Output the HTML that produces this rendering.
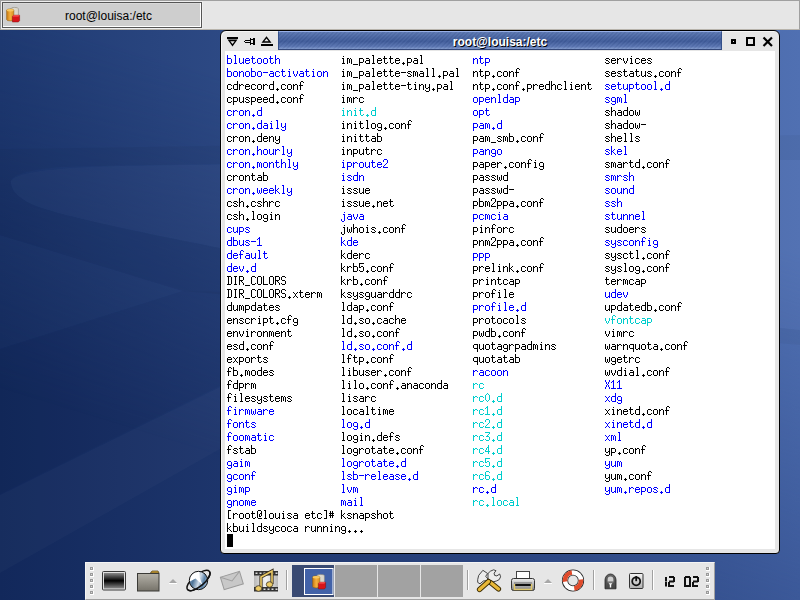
<!DOCTYPE html>
<html><head><meta charset="utf-8">
<style>
*{margin:0;padding:0;box-sizing:border-box}
html,body{width:800px;height:600px;overflow:hidden}
body{position:relative;font-family:"Liberation Sans",sans-serif;background:#1c3570}
.abs{position:absolute}
#bg{left:0;top:0;width:800px;height:600px;
 background:linear-gradient(to right,#12285b,#3a5797)}
#bg2{left:0;top:0;width:800px;height:600px;
 background:linear-gradient(to right,#1f3a72,#5070b2);
 -webkit-mask-image:linear-gradient(197deg,#000 30%,transparent 75%);mask-image:linear-gradient(197deg,#000 30%,transparent 75%)}
/* top taskbar */
#topbar{left:0;top:0;width:800px;height:30px;background:#e6e6e6;border-top:1px solid #a0a0a0;border-left:1px solid #a0a0a0;border-right:1px solid #a0a0a0;border-bottom:1px solid #b8b4ac}
#tbtn{left:1px;top:1px;width:200px;height:26px;border:1px solid #555;background:#cecece;
 box-shadow:inset -1px -1px 0 #fff, inset 1px 1px 0 #d8d8d8, 0 0 0 1px #eeeeee}
#tbtn span{position:absolute;left:62px;top:6px;font-size:12px;color:#000}
/* terminal window */
#win{left:220px;top:30px;width:560px;height:524px;background:#e6e6e6;border:1px solid #000;border-radius:6px 6px 4px 4px;box-shadow:inset 1px 1px 0 #f6f6f6}
#title{left:57px;top:0px;width:444px;height:19px;
 background:repeating-linear-gradient(135deg,rgba(255,255,255,0.03) 0px,rgba(255,255,255,0.03) 1.5px,rgba(0,0,0,0.03) 1.5px,rgba(0,0,0,0.03) 3px),linear-gradient(#5b77b1 0%,#4a66a3 30%,#3f5b9a 55%,#5a75b2 85%,#7f98cc 100%);
 border-top:1px solid #98b0e8;border-bottom:1px solid #34487a;border-left:1px solid #34508a;border-right:1px solid #34508a}
#title span{position:absolute;left:-1px;width:444px;text-align:center;top:3px;font-weight:bold;font-size:12px;color:#fff;text-shadow:1px 1px 0 #000}
#term{left:4px;top:20px;width:550px;height:498px;background:#fff}
.cur{position:absolute;left:2px;top:483px;width:6px;height:13px;background:#000}
/* bottom panel */
#panel{left:85px;top:562px;width:630px;height:38px;background:#e6e6e6;border-top:1px solid #f4f4f4;border-left:1px solid #f4f4f4;border-bottom:1px solid #a0a0a0;border-right:1px solid #a0a0a0}
</style></head>
<body>
<div id="bg" class="abs"></div><div id="bg2" class="abs"></div>
<svg class="abs" style="left:0;top:0" width="800" height="600">
 <path d="M0 149 C 80 148, 160 147, 800 135 L 800 160 C 400 162, 160 164, 60 167 C 25 170, 8 176, 11 184 L 0 186 Z" fill="#000" opacity="0.035"/>
 <path d="M11 184 C 8 176, 30 168, 120 166 C 220 164, 400 162, 800 160 L 800 330 C 500 300, 300 265, 220 248 C 120 228, 40 212, 24 200 C 16 195, 12 190, 11 184 Z" fill="#fff" opacity="0.02"/>
 <path d="M0 186 L 11 184 C 12 190, 16 195, 24 200 C 40 212, 120 228, 220 248 C 300 265, 500 300, 800 330 L 800 345 L 183 291 L 0 235 Z" fill="#000" opacity="0.035"/>
 <path d="M0 235 L 183 291 L 0 349 Z" fill="#fff" opacity="0.01"/>
 <path d="M0 349 L 183 291 L 240 292 L 240 376 L 0 494 Z" fill="#000" opacity="0.025"/>
 <path d="M0 495 L 220 387 L 300 350 L 300 410 L 220 449 L 0 573 Z" fill="#fff" opacity="0.025"/>
</svg>
<div id="topbar" class="abs">
 <div id="tbtn" class="abs"><span>root@louisa:/etc</span></div>
</div>
<div id="win" class="abs">
 <div id="title" class="abs"><span>root@louisa:/etc</span></div>
 <div id="term" class="abs"><svg class="abs" style="left:0;top:0" width="550" height="498" shape-rendering="crispEdges"><defs><path id="g0" d="M1 3h1v1h-1zM3 3h1v1h-1zM1 4h1v1h-1zM3 4h1v1h-1zM0 5h5v1h-5zM1 6h1v1h-1zM3 6h1v1h-1zM0 7h5v1h-5zM1 8h1v1h-1zM3 8h1v1h-1zM1 9h1v1h-1zM3 9h1v1h-1z"/><path id="g1" d="M0 6h5v1h-5z"/><path id="g2" d="M2 9h1v1h-1zM1 10h3v1h-3zM2 11h1v1h-1z"/><path id="g3" d="M2 2h1v1h-1zM1 3h1v1h-1zM3 3h1v1h-1zM0 4h1v1h-1zM4 4h1v1h-1zM0 5h1v1h-1zM4 5h1v1h-1zM0 6h1v1h-1zM4 6h1v1h-1zM0 7h1v1h-1zM4 7h1v1h-1zM0 8h1v1h-1zM4 8h1v1h-1zM1 9h1v1h-1zM3 9h1v1h-1zM2 10h1v1h-1z"/><path id="g4" d="M2 2h1v1h-1zM1 3h2v1h-2zM0 4h1v1h-1zM2 4h1v1h-1zM2 5h1v1h-1zM2 6h1v1h-1zM2 7h1v1h-1zM2 8h1v1h-1zM2 9h1v1h-1zM0 10h5v1h-5z"/><path id="g5" d="M1 2h3v1h-3zM0 3h1v1h-1zM4 3h1v1h-1zM0 4h1v1h-1zM4 4h1v1h-1zM4 5h1v1h-1zM3 6h1v1h-1zM2 7h1v1h-1zM1 8h1v1h-1zM0 9h1v1h-1zM0 10h5v1h-5z"/><path id="g6" d="M0 2h5v1h-5zM4 3h1v1h-1zM3 4h1v1h-1zM2 5h1v1h-1zM1 6h3v1h-3zM4 7h1v1h-1zM4 8h1v1h-1zM0 9h1v1h-1zM4 9h1v1h-1zM1 10h3v1h-3z"/><path id="g7" d="M3 2h1v1h-1zM3 3h1v1h-1zM2 4h2v1h-2zM1 5h1v1h-1zM3 5h1v1h-1zM1 6h1v1h-1zM3 6h1v1h-1zM0 7h1v1h-1zM3 7h1v1h-1zM0 8h5v1h-5zM3 9h1v1h-1zM3 10h1v1h-1z"/><path id="g8" d="M0 2h5v1h-5zM0 3h1v1h-1zM0 4h1v1h-1zM0 5h1v1h-1zM2 5h2v1h-2zM0 6h2v1h-2zM4 6h1v1h-1zM4 7h1v1h-1zM4 8h1v1h-1zM0 9h1v1h-1zM4 9h1v1h-1zM1 10h3v1h-3z"/><path id="g9" d="M1 2h3v1h-3zM0 3h1v1h-1zM4 3h1v1h-1zM0 4h1v1h-1zM0 5h1v1h-1zM0 6h4v1h-4zM0 7h1v1h-1zM4 7h1v1h-1zM0 8h1v1h-1zM4 8h1v1h-1zM0 9h1v1h-1zM4 9h1v1h-1zM1 10h3v1h-3z"/><path id="g10" d="M1 2h3v1h-3zM0 3h1v1h-1zM4 3h1v1h-1zM0 4h1v1h-1zM4 4h1v1h-1zM0 5h1v1h-1zM3 5h2v1h-2zM0 6h1v1h-1zM2 6h1v1h-1zM4 6h1v1h-1zM0 7h1v1h-1zM2 7h1v1h-1zM4 7h1v1h-1zM0 8h1v1h-1zM2 8h2v1h-2zM0 9h1v1h-1zM1 10h4v1h-4z"/><path id="g11" d="M1 2h3v1h-3zM0 3h1v1h-1zM4 3h1v1h-1zM0 4h1v1h-1zM0 5h1v1h-1zM0 6h1v1h-1zM0 7h1v1h-1zM0 8h1v1h-1zM0 9h1v1h-1zM4 9h1v1h-1zM1 10h3v1h-3z"/><path id="g12" d="M0 2h4v1h-4zM1 3h1v1h-1zM4 3h1v1h-1zM1 4h1v1h-1zM4 4h1v1h-1zM1 5h1v1h-1zM4 5h1v1h-1zM1 6h1v1h-1zM4 6h1v1h-1zM1 7h1v1h-1zM4 7h1v1h-1zM1 8h1v1h-1zM4 8h1v1h-1zM1 9h1v1h-1zM4 9h1v1h-1zM0 10h4v1h-4z"/><path id="g13" d="M1 2h3v1h-3zM2 3h1v1h-1zM2 4h1v1h-1zM2 5h1v1h-1zM2 6h1v1h-1zM2 7h1v1h-1zM2 8h1v1h-1zM2 9h1v1h-1zM1 10h3v1h-3z"/><path id="g14" d="M0 2h1v1h-1zM0 3h1v1h-1zM0 4h1v1h-1zM0 5h1v1h-1zM0 6h1v1h-1zM0 7h1v1h-1zM0 8h1v1h-1zM0 9h1v1h-1zM0 10h5v1h-5z"/><path id="g15" d="M1 2h3v1h-3zM0 3h1v1h-1zM4 3h1v1h-1zM0 4h1v1h-1zM4 4h1v1h-1zM0 5h1v1h-1zM4 5h1v1h-1zM0 6h1v1h-1zM4 6h1v1h-1zM0 7h1v1h-1zM4 7h1v1h-1zM0 8h1v1h-1zM4 8h1v1h-1zM0 9h1v1h-1zM4 9h1v1h-1zM1 10h3v1h-3z"/><path id="g16" d="M0 2h4v1h-4zM0 3h1v1h-1zM4 3h1v1h-1zM0 4h1v1h-1zM4 4h1v1h-1zM0 5h1v1h-1zM4 5h1v1h-1zM0 6h4v1h-4zM0 7h1v1h-1zM2 7h1v1h-1zM0 8h1v1h-1zM3 8h1v1h-1zM0 9h1v1h-1zM4 9h1v1h-1zM0 10h1v1h-1zM4 10h1v1h-1z"/><path id="g17" d="M1 2h3v1h-3zM0 3h1v1h-1zM4 3h1v1h-1zM0 4h1v1h-1zM0 5h1v1h-1zM1 6h3v1h-3zM4 7h1v1h-1zM4 8h1v1h-1zM0 9h1v1h-1zM4 9h1v1h-1zM1 10h3v1h-3z"/><path id="g18" d="M0 2h1v1h-1zM4 2h1v1h-1zM0 3h1v1h-1zM4 3h1v1h-1zM1 4h1v1h-1zM3 4h1v1h-1zM1 5h1v1h-1zM3 5h1v1h-1zM2 6h1v1h-1zM1 7h1v1h-1zM3 7h1v1h-1zM1 8h1v1h-1zM3 8h1v1h-1zM0 9h1v1h-1zM4 9h1v1h-1zM0 10h1v1h-1zM4 10h1v1h-1z"/><path id="g19" d="M1 2h3v1h-3zM1 3h1v1h-1zM1 4h1v1h-1zM1 5h1v1h-1zM1 6h1v1h-1zM1 7h1v1h-1zM1 8h1v1h-1zM1 9h1v1h-1zM1 10h3v1h-3z"/><path id="g20" d="M1 2h3v1h-3zM3 3h1v1h-1zM3 4h1v1h-1zM3 5h1v1h-1zM3 6h1v1h-1zM3 7h1v1h-1zM3 8h1v1h-1zM3 9h1v1h-1zM1 10h3v1h-3z"/><path id="g21" d="M0 11h5v1h-5z"/><path id="g22" d="M1 5h3v1h-3zM4 6h1v1h-1zM1 7h4v1h-4zM0 8h1v1h-1zM4 8h1v1h-1zM0 9h1v1h-1zM4 9h1v1h-1zM1 10h4v1h-4z"/><path id="g23" d="M0 2h1v1h-1zM0 3h1v1h-1zM0 4h1v1h-1zM0 5h4v1h-4zM0 6h1v1h-1zM4 6h1v1h-1zM0 7h1v1h-1zM4 7h1v1h-1zM0 8h1v1h-1zM4 8h1v1h-1zM0 9h1v1h-1zM4 9h1v1h-1zM0 10h4v1h-4z"/><path id="g24" d="M1 5h3v1h-3zM0 6h1v1h-1zM4 6h1v1h-1zM0 7h1v1h-1zM0 8h1v1h-1zM0 9h1v1h-1zM4 9h1v1h-1zM1 10h3v1h-3z"/><path id="g25" d="M4 2h1v1h-1zM4 3h1v1h-1zM4 4h1v1h-1zM1 5h4v1h-4zM0 6h1v1h-1zM4 6h1v1h-1zM0 7h1v1h-1zM4 7h1v1h-1zM0 8h1v1h-1zM4 8h1v1h-1zM0 9h1v1h-1zM4 9h1v1h-1zM1 10h4v1h-4z"/><path id="g26" d="M1 5h3v1h-3zM0 6h1v1h-1zM4 6h1v1h-1zM0 7h5v1h-5zM0 8h1v1h-1zM0 9h1v1h-1zM4 9h1v1h-1zM1 10h3v1h-3z"/><path id="g27" d="M2 2h2v1h-2zM1 3h1v1h-1zM4 3h1v1h-1zM1 4h1v1h-1zM1 5h1v1h-1zM0 6h4v1h-4zM1 7h1v1h-1zM1 8h1v1h-1zM1 9h1v1h-1zM1 10h1v1h-1z"/><path id="g28" d="M1 5h3v1h-3zM0 6h1v1h-1zM4 6h1v1h-1zM0 7h1v1h-1zM4 7h1v1h-1zM0 8h1v1h-1zM4 8h1v1h-1zM1 9h4v1h-4zM4 10h1v1h-1zM0 11h1v1h-1zM4 11h1v1h-1zM1 12h3v1h-3z"/><path id="g29" d="M0 2h1v1h-1zM0 3h1v1h-1zM0 4h1v1h-1zM0 5h1v1h-1zM2 5h2v1h-2zM0 6h2v1h-2zM4 6h1v1h-1zM0 7h1v1h-1zM4 7h1v1h-1zM0 8h1v1h-1zM4 8h1v1h-1zM0 9h1v1h-1zM4 9h1v1h-1zM0 10h1v1h-1zM4 10h1v1h-1z"/><path id="g30" d="M2 3h1v1h-1zM1 5h2v1h-2zM2 6h1v1h-1zM2 7h1v1h-1zM2 8h1v1h-1zM2 9h1v1h-1zM1 10h3v1h-3z"/><path id="g31" d="M3 3h1v1h-1zM2 5h2v1h-2zM3 6h1v1h-1zM3 7h1v1h-1zM3 8h1v1h-1zM3 9h1v1h-1zM0 10h1v1h-1zM3 10h1v1h-1zM0 11h1v1h-1zM3 11h1v1h-1zM1 12h2v1h-2z"/><path id="g32" d="M0 2h1v1h-1zM0 3h1v1h-1zM0 4h1v1h-1zM0 5h1v1h-1zM3 5h1v1h-1zM0 6h1v1h-1zM2 6h1v1h-1zM0 7h2v1h-2zM0 8h1v1h-1zM2 8h1v1h-1zM0 9h1v1h-1zM3 9h1v1h-1zM0 10h1v1h-1zM4 10h1v1h-1z"/><path id="g33" d="M1 2h2v1h-2zM2 3h1v1h-1zM2 4h1v1h-1zM2 5h1v1h-1zM2 6h1v1h-1zM2 7h1v1h-1zM2 8h1v1h-1zM2 9h1v1h-1zM1 10h3v1h-3z"/><path id="g34" d="M0 5h2v1h-2zM3 5h1v1h-1zM0 6h1v1h-1zM2 6h1v1h-1zM4 6h1v1h-1zM0 7h1v1h-1zM2 7h1v1h-1zM4 7h1v1h-1zM0 8h1v1h-1zM2 8h1v1h-1zM4 8h1v1h-1zM0 9h1v1h-1zM2 9h1v1h-1zM4 9h1v1h-1zM0 10h1v1h-1zM4 10h1v1h-1z"/><path id="g35" d="M0 5h1v1h-1zM2 5h2v1h-2zM0 6h2v1h-2zM4 6h1v1h-1zM0 7h1v1h-1zM4 7h1v1h-1zM0 8h1v1h-1zM4 8h1v1h-1zM0 9h1v1h-1zM4 9h1v1h-1zM0 10h1v1h-1zM4 10h1v1h-1z"/><path id="g36" d="M1 5h3v1h-3zM0 6h1v1h-1zM4 6h1v1h-1zM0 7h1v1h-1zM4 7h1v1h-1zM0 8h1v1h-1zM4 8h1v1h-1zM0 9h1v1h-1zM4 9h1v1h-1zM1 10h3v1h-3z"/><path id="g37" d="M0 5h4v1h-4zM0 6h1v1h-1zM4 6h1v1h-1zM0 7h1v1h-1zM4 7h1v1h-1zM0 8h1v1h-1zM4 8h1v1h-1zM0 9h4v1h-4zM0 10h1v1h-1zM0 11h1v1h-1zM0 12h1v1h-1z"/><path id="g38" d="M1 5h4v1h-4zM0 6h1v1h-1zM4 6h1v1h-1zM0 7h1v1h-1zM4 7h1v1h-1zM0 8h1v1h-1zM4 8h1v1h-1zM1 9h4v1h-4zM4 10h1v1h-1zM4 11h1v1h-1zM4 12h1v1h-1z"/><path id="g39" d="M0 5h1v1h-1zM2 5h2v1h-2zM0 6h2v1h-2zM4 6h1v1h-1zM0 7h1v1h-1zM0 8h1v1h-1zM0 9h1v1h-1zM0 10h1v1h-1z"/><path id="g40" d="M1 5h3v1h-3zM0 6h1v1h-1zM4 6h1v1h-1zM1 7h2v1h-2zM3 8h1v1h-1zM0 9h1v1h-1zM4 9h1v1h-1zM1 10h3v1h-3z"/><path id="g41" d="M1 3h1v1h-1zM1 4h1v1h-1zM0 5h4v1h-4zM1 6h1v1h-1zM1 7h1v1h-1zM1 8h1v1h-1zM1 9h1v1h-1zM4 9h1v1h-1zM2 10h2v1h-2z"/><path id="g42" d="M0 5h1v1h-1zM4 5h1v1h-1zM0 6h1v1h-1zM4 6h1v1h-1zM0 7h1v1h-1zM4 7h1v1h-1zM0 8h1v1h-1zM4 8h1v1h-1zM0 9h1v1h-1zM3 9h2v1h-2zM1 10h2v1h-2zM4 10h1v1h-1z"/><path id="g43" d="M0 5h1v1h-1zM4 5h1v1h-1zM0 6h1v1h-1zM4 6h1v1h-1zM0 7h1v1h-1zM4 7h1v1h-1zM1 8h1v1h-1zM3 8h1v1h-1zM1 9h1v1h-1zM3 9h1v1h-1zM2 10h1v1h-1z"/><path id="g44" d="M0 5h1v1h-1zM4 5h1v1h-1zM0 6h1v1h-1zM4 6h1v1h-1zM0 7h1v1h-1zM2 7h1v1h-1zM4 7h1v1h-1zM0 8h1v1h-1zM2 8h1v1h-1zM4 8h1v1h-1zM0 9h1v1h-1zM2 9h1v1h-1zM4 9h1v1h-1zM1 10h1v1h-1zM3 10h1v1h-1z"/><path id="g45" d="M0 5h1v1h-1zM4 5h1v1h-1zM1 6h1v1h-1zM3 6h1v1h-1zM2 7h1v1h-1zM2 8h1v1h-1zM1 9h1v1h-1zM3 9h1v1h-1zM0 10h1v1h-1zM4 10h1v1h-1z"/><path id="g46" d="M0 5h1v1h-1zM4 5h1v1h-1zM0 6h1v1h-1zM4 6h1v1h-1zM0 7h1v1h-1zM4 7h1v1h-1zM0 8h1v1h-1zM3 8h2v1h-2zM1 9h2v1h-2zM4 9h1v1h-1zM4 10h1v1h-1zM0 11h1v1h-1zM4 11h1v1h-1zM1 12h3v1h-3z"/></defs><g fill="#000"><use href="#g30" x="116" y="2"/><use href="#g34" x="122" y="2"/><use href="#g21" x="128" y="2"/><use href="#g37" x="134" y="2"/><use href="#g22" x="140" y="2"/><use href="#g33" x="146" y="2"/><use href="#g26" x="152" y="2"/><use href="#g41" x="158" y="2"/><use href="#g41" x="164" y="2"/><use href="#g26" x="170" y="2"/><use href="#g2" x="176" y="2"/><use href="#g37" x="182" y="2"/><use href="#g22" x="188" y="2"/><use href="#g33" x="194" y="2"/><use href="#g40" x="380" y="2"/><use href="#g26" x="386" y="2"/><use href="#g39" x="392" y="2"/><use href="#g43" x="398" y="2"/><use href="#g30" x="404" y="2"/><use href="#g24" x="410" y="2"/><use href="#g26" x="416" y="2"/><use href="#g40" x="422" y="2"/><use href="#g30" x="116" y="15"/><use href="#g34" x="122" y="15"/><use href="#g21" x="128" y="15"/><use href="#g37" x="134" y="15"/><use href="#g22" x="140" y="15"/><use href="#g33" x="146" y="15"/><use href="#g26" x="152" y="15"/><use href="#g41" x="158" y="15"/><use href="#g41" x="164" y="15"/><use href="#g26" x="170" y="15"/><use href="#g1" x="176" y="15"/><use href="#g40" x="182" y="15"/><use href="#g34" x="188" y="15"/><use href="#g22" x="194" y="15"/><use href="#g33" x="200" y="15"/><use href="#g33" x="206" y="15"/><use href="#g2" x="212" y="15"/><use href="#g37" x="218" y="15"/><use href="#g22" x="224" y="15"/><use href="#g33" x="230" y="15"/><use href="#g35" x="248" y="15"/><use href="#g41" x="254" y="15"/><use href="#g37" x="260" y="15"/><use href="#g2" x="266" y="15"/><use href="#g24" x="272" y="15"/><use href="#g36" x="278" y="15"/><use href="#g35" x="284" y="15"/><use href="#g27" x="290" y="15"/><use href="#g40" x="380" y="15"/><use href="#g26" x="386" y="15"/><use href="#g40" x="392" y="15"/><use href="#g41" x="398" y="15"/><use href="#g22" x="404" y="15"/><use href="#g41" x="410" y="15"/><use href="#g42" x="416" y="15"/><use href="#g40" x="422" y="15"/><use href="#g2" x="428" y="15"/><use href="#g24" x="434" y="15"/><use href="#g36" x="440" y="15"/><use href="#g35" x="446" y="15"/><use href="#g27" x="452" y="15"/><use href="#g24" x="2" y="28"/><use href="#g25" x="8" y="28"/><use href="#g39" x="14" y="28"/><use href="#g26" x="20" y="28"/><use href="#g24" x="26" y="28"/><use href="#g36" x="32" y="28"/><use href="#g39" x="38" y="28"/><use href="#g25" x="44" y="28"/><use href="#g2" x="50" y="28"/><use href="#g24" x="56" y="28"/><use href="#g36" x="62" y="28"/><use href="#g35" x="68" y="28"/><use href="#g27" x="74" y="28"/><use href="#g30" x="116" y="28"/><use href="#g34" x="122" y="28"/><use href="#g21" x="128" y="28"/><use href="#g37" x="134" y="28"/><use href="#g22" x="140" y="28"/><use href="#g33" x="146" y="28"/><use href="#g26" x="152" y="28"/><use href="#g41" x="158" y="28"/><use href="#g41" x="164" y="28"/><use href="#g26" x="170" y="28"/><use href="#g1" x="176" y="28"/><use href="#g41" x="182" y="28"/><use href="#g30" x="188" y="28"/><use href="#g35" x="194" y="28"/><use href="#g46" x="200" y="28"/><use href="#g2" x="206" y="28"/><use href="#g37" x="212" y="28"/><use href="#g22" x="218" y="28"/><use href="#g33" x="224" y="28"/><use href="#g35" x="248" y="28"/><use href="#g41" x="254" y="28"/><use href="#g37" x="260" y="28"/><use href="#g2" x="266" y="28"/><use href="#g24" x="272" y="28"/><use href="#g36" x="278" y="28"/><use href="#g35" x="284" y="28"/><use href="#g27" x="290" y="28"/><use href="#g2" x="296" y="28"/><use href="#g37" x="302" y="28"/><use href="#g39" x="308" y="28"/><use href="#g26" x="314" y="28"/><use href="#g25" x="320" y="28"/><use href="#g29" x="326" y="28"/><use href="#g24" x="332" y="28"/><use href="#g33" x="338" y="28"/><use href="#g30" x="344" y="28"/><use href="#g26" x="350" y="28"/><use href="#g35" x="356" y="28"/><use href="#g41" x="362" y="28"/><use href="#g24" x="2" y="41"/><use href="#g37" x="8" y="41"/><use href="#g42" x="14" y="41"/><use href="#g40" x="20" y="41"/><use href="#g37" x="26" y="41"/><use href="#g26" x="32" y="41"/><use href="#g26" x="38" y="41"/><use href="#g25" x="44" y="41"/><use href="#g2" x="50" y="41"/><use href="#g24" x="56" y="41"/><use href="#g36" x="62" y="41"/><use href="#g35" x="68" y="41"/><use href="#g27" x="74" y="41"/><use href="#g30" x="116" y="41"/><use href="#g34" x="122" y="41"/><use href="#g39" x="128" y="41"/><use href="#g24" x="134" y="41"/><use href="#g40" x="380" y="54"/><use href="#g29" x="386" y="54"/><use href="#g22" x="392" y="54"/><use href="#g25" x="398" y="54"/><use href="#g36" x="404" y="54"/><use href="#g44" x="410" y="54"/><use href="#g30" x="116" y="67"/><use href="#g35" x="122" y="67"/><use href="#g30" x="128" y="67"/><use href="#g41" x="134" y="67"/><use href="#g33" x="140" y="67"/><use href="#g36" x="146" y="67"/><use href="#g28" x="152" y="67"/><use href="#g2" x="158" y="67"/><use href="#g24" x="164" y="67"/><use href="#g36" x="170" y="67"/><use href="#g35" x="176" y="67"/><use href="#g27" x="182" y="67"/><use href="#g40" x="380" y="67"/><use href="#g29" x="386" y="67"/><use href="#g22" x="392" y="67"/><use href="#g25" x="398" y="67"/><use href="#g36" x="404" y="67"/><use href="#g44" x="410" y="67"/><use href="#g1" x="416" y="67"/><use href="#g24" x="2" y="80"/><use href="#g39" x="8" y="80"/><use href="#g36" x="14" y="80"/><use href="#g35" x="20" y="80"/><use href="#g2" x="26" y="80"/><use href="#g25" x="32" y="80"/><use href="#g26" x="38" y="80"/><use href="#g35" x="44" y="80"/><use href="#g46" x="50" y="80"/><use href="#g30" x="116" y="80"/><use href="#g35" x="122" y="80"/><use href="#g30" x="128" y="80"/><use href="#g41" x="134" y="80"/><use href="#g41" x="140" y="80"/><use href="#g22" x="146" y="80"/><use href="#g23" x="152" y="80"/><use href="#g37" x="248" y="80"/><use href="#g22" x="254" y="80"/><use href="#g34" x="260" y="80"/><use href="#g21" x="266" y="80"/><use href="#g40" x="272" y="80"/><use href="#g34" x="278" y="80"/><use href="#g23" x="284" y="80"/><use href="#g2" x="290" y="80"/><use href="#g24" x="296" y="80"/><use href="#g36" x="302" y="80"/><use href="#g35" x="308" y="80"/><use href="#g27" x="314" y="80"/><use href="#g40" x="380" y="80"/><use href="#g29" x="386" y="80"/><use href="#g26" x="392" y="80"/><use href="#g33" x="398" y="80"/><use href="#g33" x="404" y="80"/><use href="#g40" x="410" y="80"/><use href="#g30" x="116" y="93"/><use href="#g35" x="122" y="93"/><use href="#g37" x="128" y="93"/><use href="#g42" x="134" y="93"/><use href="#g41" x="140" y="93"/><use href="#g39" x="146" y="93"/><use href="#g24" x="152" y="93"/><use href="#g37" x="248" y="106"/><use href="#g22" x="254" y="106"/><use href="#g37" x="260" y="106"/><use href="#g26" x="266" y="106"/><use href="#g39" x="272" y="106"/><use href="#g2" x="278" y="106"/><use href="#g24" x="284" y="106"/><use href="#g36" x="290" y="106"/><use href="#g35" x="296" y="106"/><use href="#g27" x="302" y="106"/><use href="#g30" x="308" y="106"/><use href="#g28" x="314" y="106"/><use href="#g40" x="380" y="106"/><use href="#g34" x="386" y="106"/><use href="#g22" x="392" y="106"/><use href="#g39" x="398" y="106"/><use href="#g41" x="404" y="106"/><use href="#g25" x="410" y="106"/><use href="#g2" x="416" y="106"/><use href="#g24" x="422" y="106"/><use href="#g36" x="428" y="106"/><use href="#g35" x="434" y="106"/><use href="#g27" x="440" y="106"/><use href="#g24" x="2" y="119"/><use href="#g39" x="8" y="119"/><use href="#g36" x="14" y="119"/><use href="#g35" x="20" y="119"/><use href="#g41" x="26" y="119"/><use href="#g22" x="32" y="119"/><use href="#g23" x="38" y="119"/><use href="#g37" x="248" y="119"/><use href="#g22" x="254" y="119"/><use href="#g40" x="260" y="119"/><use href="#g40" x="266" y="119"/><use href="#g44" x="272" y="119"/><use href="#g25" x="278" y="119"/><use href="#g30" x="116" y="132"/><use href="#g40" x="122" y="132"/><use href="#g40" x="128" y="132"/><use href="#g42" x="134" y="132"/><use href="#g26" x="140" y="132"/><use href="#g37" x="248" y="132"/><use href="#g22" x="254" y="132"/><use href="#g40" x="260" y="132"/><use href="#g40" x="266" y="132"/><use href="#g44" x="272" y="132"/><use href="#g25" x="278" y="132"/><use href="#g1" x="284" y="132"/><use href="#g24" x="2" y="145"/><use href="#g40" x="8" y="145"/><use href="#g29" x="14" y="145"/><use href="#g2" x="20" y="145"/><use href="#g24" x="26" y="145"/><use href="#g40" x="32" y="145"/><use href="#g29" x="38" y="145"/><use href="#g39" x="44" y="145"/><use href="#g24" x="50" y="145"/><use href="#g30" x="116" y="145"/><use href="#g40" x="122" y="145"/><use href="#g40" x="128" y="145"/><use href="#g42" x="134" y="145"/><use href="#g26" x="140" y="145"/><use href="#g2" x="146" y="145"/><use href="#g35" x="152" y="145"/><use href="#g26" x="158" y="145"/><use href="#g41" x="164" y="145"/><use href="#g37" x="248" y="145"/><use href="#g23" x="254" y="145"/><use href="#g34" x="260" y="145"/><use href="#g5" x="266" y="145"/><use href="#g37" x="272" y="145"/><use href="#g37" x="278" y="145"/><use href="#g22" x="284" y="145"/><use href="#g2" x="290" y="145"/><use href="#g24" x="296" y="145"/><use href="#g36" x="302" y="145"/><use href="#g35" x="308" y="145"/><use href="#g27" x="314" y="145"/><use href="#g24" x="2" y="158"/><use href="#g40" x="8" y="158"/><use href="#g29" x="14" y="158"/><use href="#g2" x="20" y="158"/><use href="#g33" x="26" y="158"/><use href="#g36" x="32" y="158"/><use href="#g28" x="38" y="158"/><use href="#g30" x="44" y="158"/><use href="#g35" x="50" y="158"/><use href="#g31" x="116" y="171"/><use href="#g44" x="122" y="171"/><use href="#g29" x="128" y="171"/><use href="#g36" x="134" y="171"/><use href="#g30" x="140" y="171"/><use href="#g40" x="146" y="171"/><use href="#g2" x="152" y="171"/><use href="#g24" x="158" y="171"/><use href="#g36" x="164" y="171"/><use href="#g35" x="170" y="171"/><use href="#g27" x="176" y="171"/><use href="#g37" x="248" y="171"/><use href="#g30" x="254" y="171"/><use href="#g35" x="260" y="171"/><use href="#g27" x="266" y="171"/><use href="#g36" x="272" y="171"/><use href="#g39" x="278" y="171"/><use href="#g24" x="284" y="171"/><use href="#g40" x="380" y="171"/><use href="#g42" x="386" y="171"/><use href="#g25" x="392" y="171"/><use href="#g36" x="398" y="171"/><use href="#g26" x="404" y="171"/><use href="#g39" x="410" y="171"/><use href="#g40" x="416" y="171"/><use href="#g37" x="248" y="184"/><use href="#g35" x="254" y="184"/><use href="#g34" x="260" y="184"/><use href="#g5" x="266" y="184"/><use href="#g37" x="272" y="184"/><use href="#g37" x="278" y="184"/><use href="#g22" x="284" y="184"/><use href="#g2" x="290" y="184"/><use href="#g24" x="296" y="184"/><use href="#g36" x="302" y="184"/><use href="#g35" x="308" y="184"/><use href="#g27" x="314" y="184"/><use href="#g32" x="116" y="197"/><use href="#g25" x="122" y="197"/><use href="#g26" x="128" y="197"/><use href="#g39" x="134" y="197"/><use href="#g24" x="140" y="197"/><use href="#g40" x="380" y="197"/><use href="#g46" x="386" y="197"/><use href="#g40" x="392" y="197"/><use href="#g24" x="398" y="197"/><use href="#g41" x="404" y="197"/><use href="#g33" x="410" y="197"/><use href="#g2" x="416" y="197"/><use href="#g24" x="422" y="197"/><use href="#g36" x="428" y="197"/><use href="#g35" x="434" y="197"/><use href="#g27" x="440" y="197"/><use href="#g32" x="116" y="210"/><use href="#g39" x="122" y="210"/><use href="#g23" x="128" y="210"/><use href="#g8" x="134" y="210"/><use href="#g2" x="140" y="210"/><use href="#g24" x="146" y="210"/><use href="#g36" x="152" y="210"/><use href="#g35" x="158" y="210"/><use href="#g27" x="164" y="210"/><use href="#g37" x="248" y="210"/><use href="#g39" x="254" y="210"/><use href="#g26" x="260" y="210"/><use href="#g33" x="266" y="210"/><use href="#g30" x="272" y="210"/><use href="#g35" x="278" y="210"/><use href="#g32" x="284" y="210"/><use href="#g2" x="290" y="210"/><use href="#g24" x="296" y="210"/><use href="#g36" x="302" y="210"/><use href="#g35" x="308" y="210"/><use href="#g27" x="314" y="210"/><use href="#g40" x="380" y="210"/><use href="#g46" x="386" y="210"/><use href="#g40" x="392" y="210"/><use href="#g33" x="398" y="210"/><use href="#g36" x="404" y="210"/><use href="#g28" x="410" y="210"/><use href="#g2" x="416" y="210"/><use href="#g24" x="422" y="210"/><use href="#g36" x="428" y="210"/><use href="#g35" x="434" y="210"/><use href="#g27" x="440" y="210"/><use href="#g12" x="2" y="223"/><use href="#g13" x="8" y="223"/><use href="#g16" x="14" y="223"/><use href="#g21" x="20" y="223"/><use href="#g11" x="26" y="223"/><use href="#g15" x="32" y="223"/><use href="#g14" x="38" y="223"/><use href="#g15" x="44" y="223"/><use href="#g16" x="50" y="223"/><use href="#g17" x="56" y="223"/><use href="#g32" x="116" y="223"/><use href="#g39" x="122" y="223"/><use href="#g23" x="128" y="223"/><use href="#g2" x="134" y="223"/><use href="#g24" x="140" y="223"/><use href="#g36" x="146" y="223"/><use href="#g35" x="152" y="223"/><use href="#g27" x="158" y="223"/><use href="#g37" x="248" y="223"/><use href="#g39" x="254" y="223"/><use href="#g30" x="260" y="223"/><use href="#g35" x="266" y="223"/><use href="#g41" x="272" y="223"/><use href="#g24" x="278" y="223"/><use href="#g22" x="284" y="223"/><use href="#g37" x="290" y="223"/><use href="#g41" x="380" y="223"/><use href="#g26" x="386" y="223"/><use href="#g39" x="392" y="223"/><use href="#g34" x="398" y="223"/><use href="#g24" x="404" y="223"/><use href="#g22" x="410" y="223"/><use href="#g37" x="416" y="223"/><use href="#g12" x="2" y="236"/><use href="#g13" x="8" y="236"/><use href="#g16" x="14" y="236"/><use href="#g21" x="20" y="236"/><use href="#g11" x="26" y="236"/><use href="#g15" x="32" y="236"/><use href="#g14" x="38" y="236"/><use href="#g15" x="44" y="236"/><use href="#g16" x="50" y="236"/><use href="#g17" x="56" y="236"/><use href="#g2" x="62" y="236"/><use href="#g45" x="68" y="236"/><use href="#g41" x="74" y="236"/><use href="#g26" x="80" y="236"/><use href="#g39" x="86" y="236"/><use href="#g34" x="92" y="236"/><use href="#g32" x="116" y="236"/><use href="#g40" x="122" y="236"/><use href="#g46" x="128" y="236"/><use href="#g40" x="134" y="236"/><use href="#g28" x="140" y="236"/><use href="#g42" x="146" y="236"/><use href="#g22" x="152" y="236"/><use href="#g39" x="158" y="236"/><use href="#g25" x="164" y="236"/><use href="#g25" x="170" y="236"/><use href="#g39" x="176" y="236"/><use href="#g24" x="182" y="236"/><use href="#g37" x="248" y="236"/><use href="#g39" x="254" y="236"/><use href="#g36" x="260" y="236"/><use href="#g27" x="266" y="236"/><use href="#g30" x="272" y="236"/><use href="#g33" x="278" y="236"/><use href="#g26" x="284" y="236"/><use href="#g25" x="2" y="249"/><use href="#g42" x="8" y="249"/><use href="#g34" x="14" y="249"/><use href="#g37" x="20" y="249"/><use href="#g25" x="26" y="249"/><use href="#g22" x="32" y="249"/><use href="#g41" x="38" y="249"/><use href="#g26" x="44" y="249"/><use href="#g40" x="50" y="249"/><use href="#g33" x="116" y="249"/><use href="#g25" x="122" y="249"/><use href="#g22" x="128" y="249"/><use href="#g37" x="134" y="249"/><use href="#g2" x="140" y="249"/><use href="#g24" x="146" y="249"/><use href="#g36" x="152" y="249"/><use href="#g35" x="158" y="249"/><use href="#g27" x="164" y="249"/><use href="#g42" x="380" y="249"/><use href="#g37" x="386" y="249"/><use href="#g25" x="392" y="249"/><use href="#g22" x="398" y="249"/><use href="#g41" x="404" y="249"/><use href="#g26" x="410" y="249"/><use href="#g25" x="416" y="249"/><use href="#g23" x="422" y="249"/><use href="#g2" x="428" y="249"/><use href="#g24" x="434" y="249"/><use href="#g36" x="440" y="249"/><use href="#g35" x="446" y="249"/><use href="#g27" x="452" y="249"/><use href="#g26" x="2" y="262"/><use href="#g35" x="8" y="262"/><use href="#g40" x="14" y="262"/><use href="#g24" x="20" y="262"/><use href="#g39" x="26" y="262"/><use href="#g30" x="32" y="262"/><use href="#g37" x="38" y="262"/><use href="#g41" x="44" y="262"/><use href="#g2" x="50" y="262"/><use href="#g24" x="56" y="262"/><use href="#g27" x="62" y="262"/><use href="#g28" x="68" y="262"/><use href="#g33" x="116" y="262"/><use href="#g25" x="122" y="262"/><use href="#g2" x="128" y="262"/><use href="#g40" x="134" y="262"/><use href="#g36" x="140" y="262"/><use href="#g2" x="146" y="262"/><use href="#g24" x="152" y="262"/><use href="#g22" x="158" y="262"/><use href="#g24" x="164" y="262"/><use href="#g29" x="170" y="262"/><use href="#g26" x="176" y="262"/><use href="#g37" x="248" y="262"/><use href="#g39" x="254" y="262"/><use href="#g36" x="260" y="262"/><use href="#g41" x="266" y="262"/><use href="#g36" x="272" y="262"/><use href="#g24" x="278" y="262"/><use href="#g36" x="284" y="262"/><use href="#g33" x="290" y="262"/><use href="#g40" x="296" y="262"/><use href="#g26" x="2" y="275"/><use href="#g35" x="8" y="275"/><use href="#g43" x="14" y="275"/><use href="#g30" x="20" y="275"/><use href="#g39" x="26" y="275"/><use href="#g36" x="32" y="275"/><use href="#g35" x="38" y="275"/><use href="#g34" x="44" y="275"/><use href="#g26" x="50" y="275"/><use href="#g35" x="56" y="275"/><use href="#g41" x="62" y="275"/><use href="#g33" x="116" y="275"/><use href="#g25" x="122" y="275"/><use href="#g2" x="128" y="275"/><use href="#g40" x="134" y="275"/><use href="#g36" x="140" y="275"/><use href="#g2" x="146" y="275"/><use href="#g24" x="152" y="275"/><use href="#g36" x="158" y="275"/><use href="#g35" x="164" y="275"/><use href="#g27" x="170" y="275"/><use href="#g37" x="248" y="275"/><use href="#g44" x="254" y="275"/><use href="#g25" x="260" y="275"/><use href="#g23" x="266" y="275"/><use href="#g2" x="272" y="275"/><use href="#g24" x="278" y="275"/><use href="#g36" x="284" y="275"/><use href="#g35" x="290" y="275"/><use href="#g27" x="296" y="275"/><use href="#g43" x="380" y="275"/><use href="#g30" x="386" y="275"/><use href="#g34" x="392" y="275"/><use href="#g39" x="398" y="275"/><use href="#g24" x="404" y="275"/><use href="#g26" x="2" y="288"/><use href="#g40" x="8" y="288"/><use href="#g25" x="14" y="288"/><use href="#g2" x="20" y="288"/><use href="#g24" x="26" y="288"/><use href="#g36" x="32" y="288"/><use href="#g35" x="38" y="288"/><use href="#g27" x="44" y="288"/><use href="#g38" x="248" y="288"/><use href="#g42" x="254" y="288"/><use href="#g36" x="260" y="288"/><use href="#g41" x="266" y="288"/><use href="#g22" x="272" y="288"/><use href="#g28" x="278" y="288"/><use href="#g39" x="284" y="288"/><use href="#g37" x="290" y="288"/><use href="#g22" x="296" y="288"/><use href="#g25" x="302" y="288"/><use href="#g34" x="308" y="288"/><use href="#g30" x="314" y="288"/><use href="#g35" x="320" y="288"/><use href="#g40" x="326" y="288"/><use href="#g44" x="380" y="288"/><use href="#g22" x="386" y="288"/><use href="#g39" x="392" y="288"/><use href="#g35" x="398" y="288"/><use href="#g38" x="404" y="288"/><use href="#g42" x="410" y="288"/><use href="#g36" x="416" y="288"/><use href="#g41" x="422" y="288"/><use href="#g22" x="428" y="288"/><use href="#g2" x="434" y="288"/><use href="#g24" x="440" y="288"/><use href="#g36" x="446" y="288"/><use href="#g35" x="452" y="288"/><use href="#g27" x="458" y="288"/><use href="#g26" x="2" y="301"/><use href="#g45" x="8" y="301"/><use href="#g37" x="14" y="301"/><use href="#g36" x="20" y="301"/><use href="#g39" x="26" y="301"/><use href="#g41" x="32" y="301"/><use href="#g40" x="38" y="301"/><use href="#g33" x="116" y="301"/><use href="#g27" x="122" y="301"/><use href="#g41" x="128" y="301"/><use href="#g37" x="134" y="301"/><use href="#g2" x="140" y="301"/><use href="#g24" x="146" y="301"/><use href="#g36" x="152" y="301"/><use href="#g35" x="158" y="301"/><use href="#g27" x="164" y="301"/><use href="#g38" x="248" y="301"/><use href="#g42" x="254" y="301"/><use href="#g36" x="260" y="301"/><use href="#g41" x="266" y="301"/><use href="#g22" x="272" y="301"/><use href="#g41" x="278" y="301"/><use href="#g22" x="284" y="301"/><use href="#g23" x="290" y="301"/><use href="#g44" x="380" y="301"/><use href="#g28" x="386" y="301"/><use href="#g26" x="392" y="301"/><use href="#g41" x="398" y="301"/><use href="#g39" x="404" y="301"/><use href="#g24" x="410" y="301"/><use href="#g27" x="2" y="314"/><use href="#g23" x="8" y="314"/><use href="#g2" x="14" y="314"/><use href="#g34" x="20" y="314"/><use href="#g36" x="26" y="314"/><use href="#g25" x="32" y="314"/><use href="#g26" x="38" y="314"/><use href="#g40" x="44" y="314"/><use href="#g33" x="116" y="314"/><use href="#g30" x="122" y="314"/><use href="#g23" x="128" y="314"/><use href="#g42" x="134" y="314"/><use href="#g40" x="140" y="314"/><use href="#g26" x="146" y="314"/><use href="#g39" x="152" y="314"/><use href="#g2" x="158" y="314"/><use href="#g24" x="164" y="314"/><use href="#g36" x="170" y="314"/><use href="#g35" x="176" y="314"/><use href="#g27" x="182" y="314"/><use href="#g44" x="380" y="314"/><use href="#g43" x="386" y="314"/><use href="#g25" x="392" y="314"/><use href="#g30" x="398" y="314"/><use href="#g22" x="404" y="314"/><use href="#g33" x="410" y="314"/><use href="#g2" x="416" y="314"/><use href="#g24" x="422" y="314"/><use href="#g36" x="428" y="314"/><use href="#g35" x="434" y="314"/><use href="#g27" x="440" y="314"/><use href="#g27" x="2" y="327"/><use href="#g25" x="8" y="327"/><use href="#g37" x="14" y="327"/><use href="#g39" x="20" y="327"/><use href="#g34" x="26" y="327"/><use href="#g33" x="116" y="327"/><use href="#g30" x="122" y="327"/><use href="#g33" x="128" y="327"/><use href="#g36" x="134" y="327"/><use href="#g2" x="140" y="327"/><use href="#g24" x="146" y="327"/><use href="#g36" x="152" y="327"/><use href="#g35" x="158" y="327"/><use href="#g27" x="164" y="327"/><use href="#g2" x="170" y="327"/><use href="#g22" x="176" y="327"/><use href="#g35" x="182" y="327"/><use href="#g22" x="188" y="327"/><use href="#g24" x="194" y="327"/><use href="#g36" x="200" y="327"/><use href="#g35" x="206" y="327"/><use href="#g25" x="212" y="327"/><use href="#g22" x="218" y="327"/><use href="#g27" x="2" y="340"/><use href="#g30" x="8" y="340"/><use href="#g33" x="14" y="340"/><use href="#g26" x="20" y="340"/><use href="#g40" x="26" y="340"/><use href="#g46" x="32" y="340"/><use href="#g40" x="38" y="340"/><use href="#g41" x="44" y="340"/><use href="#g26" x="50" y="340"/><use href="#g34" x="56" y="340"/><use href="#g40" x="62" y="340"/><use href="#g33" x="116" y="340"/><use href="#g30" x="122" y="340"/><use href="#g40" x="128" y="340"/><use href="#g22" x="134" y="340"/><use href="#g39" x="140" y="340"/><use href="#g24" x="146" y="340"/><use href="#g33" x="116" y="353"/><use href="#g36" x="122" y="353"/><use href="#g24" x="128" y="353"/><use href="#g22" x="134" y="353"/><use href="#g33" x="140" y="353"/><use href="#g41" x="146" y="353"/><use href="#g30" x="152" y="353"/><use href="#g34" x="158" y="353"/><use href="#g26" x="164" y="353"/><use href="#g45" x="380" y="353"/><use href="#g30" x="386" y="353"/><use href="#g35" x="392" y="353"/><use href="#g26" x="398" y="353"/><use href="#g41" x="404" y="353"/><use href="#g25" x="410" y="353"/><use href="#g2" x="416" y="353"/><use href="#g24" x="422" y="353"/><use href="#g36" x="428" y="353"/><use href="#g35" x="434" y="353"/><use href="#g27" x="440" y="353"/><use href="#g33" x="116" y="379"/><use href="#g36" x="122" y="379"/><use href="#g28" x="128" y="379"/><use href="#g30" x="134" y="379"/><use href="#g35" x="140" y="379"/><use href="#g2" x="146" y="379"/><use href="#g25" x="152" y="379"/><use href="#g26" x="158" y="379"/><use href="#g27" x="164" y="379"/><use href="#g40" x="170" y="379"/><use href="#g27" x="2" y="392"/><use href="#g40" x="8" y="392"/><use href="#g41" x="14" y="392"/><use href="#g22" x="20" y="392"/><use href="#g23" x="26" y="392"/><use href="#g33" x="116" y="392"/><use href="#g36" x="122" y="392"/><use href="#g28" x="128" y="392"/><use href="#g39" x="134" y="392"/><use href="#g36" x="140" y="392"/><use href="#g41" x="146" y="392"/><use href="#g22" x="152" y="392"/><use href="#g41" x="158" y="392"/><use href="#g26" x="164" y="392"/><use href="#g2" x="170" y="392"/><use href="#g24" x="176" y="392"/><use href="#g36" x="182" y="392"/><use href="#g35" x="188" y="392"/><use href="#g27" x="194" y="392"/><use href="#g46" x="380" y="392"/><use href="#g37" x="386" y="392"/><use href="#g2" x="392" y="392"/><use href="#g24" x="398" y="392"/><use href="#g36" x="404" y="392"/><use href="#g35" x="410" y="392"/><use href="#g27" x="416" y="392"/><use href="#g46" x="380" y="418"/><use href="#g42" x="386" y="418"/><use href="#g34" x="392" y="418"/><use href="#g2" x="398" y="418"/><use href="#g24" x="404" y="418"/><use href="#g36" x="410" y="418"/><use href="#g35" x="416" y="418"/><use href="#g27" x="422" y="418"/><use href="#g19" x="2" y="457"/><use href="#g39" x="8" y="457"/><use href="#g36" x="14" y="457"/><use href="#g36" x="20" y="457"/><use href="#g41" x="26" y="457"/><use href="#g10" x="32" y="457"/><use href="#g33" x="38" y="457"/><use href="#g36" x="44" y="457"/><use href="#g42" x="50" y="457"/><use href="#g30" x="56" y="457"/><use href="#g40" x="62" y="457"/><use href="#g22" x="68" y="457"/><use href="#g26" x="80" y="457"/><use href="#g41" x="86" y="457"/><use href="#g24" x="92" y="457"/><use href="#g20" x="98" y="457"/><use href="#g0" x="104" y="457"/><use href="#g32" x="116" y="457"/><use href="#g40" x="122" y="457"/><use href="#g35" x="128" y="457"/><use href="#g22" x="134" y="457"/><use href="#g37" x="140" y="457"/><use href="#g40" x="146" y="457"/><use href="#g29" x="152" y="457"/><use href="#g36" x="158" y="457"/><use href="#g41" x="164" y="457"/><use href="#g32" x="2" y="470"/><use href="#g23" x="8" y="470"/><use href="#g42" x="14" y="470"/><use href="#g30" x="20" y="470"/><use href="#g33" x="26" y="470"/><use href="#g25" x="32" y="470"/><use href="#g40" x="38" y="470"/><use href="#g46" x="44" y="470"/><use href="#g24" x="50" y="470"/><use href="#g36" x="56" y="470"/><use href="#g24" x="62" y="470"/><use href="#g22" x="68" y="470"/><use href="#g39" x="80" y="470"/><use href="#g42" x="86" y="470"/><use href="#g35" x="92" y="470"/><use href="#g35" x="98" y="470"/><use href="#g30" x="104" y="470"/><use href="#g35" x="110" y="470"/><use href="#g28" x="116" y="470"/><use href="#g2" x="122" y="470"/><use href="#g2" x="128" y="470"/><use href="#g2" x="134" y="470"/></g><g fill="#0000ff"><use href="#g23" x="2" y="2"/><use href="#g33" x="8" y="2"/><use href="#g42" x="14" y="2"/><use href="#g26" x="20" y="2"/><use href="#g41" x="26" y="2"/><use href="#g36" x="32" y="2"/><use href="#g36" x="38" y="2"/><use href="#g41" x="44" y="2"/><use href="#g29" x="50" y="2"/><use href="#g35" x="248" y="2"/><use href="#g41" x="254" y="2"/><use href="#g37" x="260" y="2"/><use href="#g23" x="2" y="15"/><use href="#g36" x="8" y="15"/><use href="#g35" x="14" y="15"/><use href="#g36" x="20" y="15"/><use href="#g23" x="26" y="15"/><use href="#g36" x="32" y="15"/><use href="#g1" x="38" y="15"/><use href="#g22" x="44" y="15"/><use href="#g24" x="50" y="15"/><use href="#g41" x="56" y="15"/><use href="#g30" x="62" y="15"/><use href="#g43" x="68" y="15"/><use href="#g22" x="74" y="15"/><use href="#g41" x="80" y="15"/><use href="#g30" x="86" y="15"/><use href="#g36" x="92" y="15"/><use href="#g35" x="98" y="15"/><use href="#g40" x="380" y="28"/><use href="#g26" x="386" y="28"/><use href="#g41" x="392" y="28"/><use href="#g42" x="398" y="28"/><use href="#g37" x="404" y="28"/><use href="#g41" x="410" y="28"/><use href="#g36" x="416" y="28"/><use href="#g36" x="422" y="28"/><use href="#g33" x="428" y="28"/><use href="#g2" x="434" y="28"/><use href="#g25" x="440" y="28"/><use href="#g36" x="248" y="41"/><use href="#g37" x="254" y="41"/><use href="#g26" x="260" y="41"/><use href="#g35" x="266" y="41"/><use href="#g33" x="272" y="41"/><use href="#g25" x="278" y="41"/><use href="#g22" x="284" y="41"/><use href="#g37" x="290" y="41"/><use href="#g40" x="380" y="41"/><use href="#g28" x="386" y="41"/><use href="#g34" x="392" y="41"/><use href="#g33" x="398" y="41"/><use href="#g24" x="2" y="54"/><use href="#g39" x="8" y="54"/><use href="#g36" x="14" y="54"/><use href="#g35" x="20" y="54"/><use href="#g2" x="26" y="54"/><use href="#g25" x="32" y="54"/><use href="#g36" x="248" y="54"/><use href="#g37" x="254" y="54"/><use href="#g41" x="260" y="54"/><use href="#g24" x="2" y="67"/><use href="#g39" x="8" y="67"/><use href="#g36" x="14" y="67"/><use href="#g35" x="20" y="67"/><use href="#g2" x="26" y="67"/><use href="#g25" x="32" y="67"/><use href="#g22" x="38" y="67"/><use href="#g30" x="44" y="67"/><use href="#g33" x="50" y="67"/><use href="#g46" x="56" y="67"/><use href="#g37" x="248" y="67"/><use href="#g22" x="254" y="67"/><use href="#g34" x="260" y="67"/><use href="#g2" x="266" y="67"/><use href="#g25" x="272" y="67"/><use href="#g24" x="2" y="93"/><use href="#g39" x="8" y="93"/><use href="#g36" x="14" y="93"/><use href="#g35" x="20" y="93"/><use href="#g2" x="26" y="93"/><use href="#g29" x="32" y="93"/><use href="#g36" x="38" y="93"/><use href="#g42" x="44" y="93"/><use href="#g39" x="50" y="93"/><use href="#g33" x="56" y="93"/><use href="#g46" x="62" y="93"/><use href="#g37" x="248" y="93"/><use href="#g22" x="254" y="93"/><use href="#g35" x="260" y="93"/><use href="#g28" x="266" y="93"/><use href="#g36" x="272" y="93"/><use href="#g40" x="380" y="93"/><use href="#g32" x="386" y="93"/><use href="#g26" x="392" y="93"/><use href="#g33" x="398" y="93"/><use href="#g24" x="2" y="106"/><use href="#g39" x="8" y="106"/><use href="#g36" x="14" y="106"/><use href="#g35" x="20" y="106"/><use href="#g2" x="26" y="106"/><use href="#g34" x="32" y="106"/><use href="#g36" x="38" y="106"/><use href="#g35" x="44" y="106"/><use href="#g41" x="50" y="106"/><use href="#g29" x="56" y="106"/><use href="#g33" x="62" y="106"/><use href="#g46" x="68" y="106"/><use href="#g30" x="116" y="106"/><use href="#g37" x="122" y="106"/><use href="#g39" x="128" y="106"/><use href="#g36" x="134" y="106"/><use href="#g42" x="140" y="106"/><use href="#g41" x="146" y="106"/><use href="#g26" x="152" y="106"/><use href="#g5" x="158" y="106"/><use href="#g30" x="116" y="119"/><use href="#g40" x="122" y="119"/><use href="#g25" x="128" y="119"/><use href="#g35" x="134" y="119"/><use href="#g40" x="380" y="119"/><use href="#g34" x="386" y="119"/><use href="#g39" x="392" y="119"/><use href="#g40" x="398" y="119"/><use href="#g29" x="404" y="119"/><use href="#g24" x="2" y="132"/><use href="#g39" x="8" y="132"/><use href="#g36" x="14" y="132"/><use href="#g35" x="20" y="132"/><use href="#g2" x="26" y="132"/><use href="#g44" x="32" y="132"/><use href="#g26" x="38" y="132"/><use href="#g26" x="44" y="132"/><use href="#g32" x="50" y="132"/><use href="#g33" x="56" y="132"/><use href="#g46" x="62" y="132"/><use href="#g40" x="380" y="132"/><use href="#g36" x="386" y="132"/><use href="#g42" x="392" y="132"/><use href="#g35" x="398" y="132"/><use href="#g25" x="404" y="132"/><use href="#g40" x="380" y="145"/><use href="#g40" x="386" y="145"/><use href="#g29" x="392" y="145"/><use href="#g31" x="116" y="158"/><use href="#g22" x="122" y="158"/><use href="#g43" x="128" y="158"/><use href="#g22" x="134" y="158"/><use href="#g37" x="248" y="158"/><use href="#g24" x="254" y="158"/><use href="#g34" x="260" y="158"/><use href="#g24" x="266" y="158"/><use href="#g30" x="272" y="158"/><use href="#g22" x="278" y="158"/><use href="#g40" x="380" y="158"/><use href="#g41" x="386" y="158"/><use href="#g42" x="392" y="158"/><use href="#g35" x="398" y="158"/><use href="#g35" x="404" y="158"/><use href="#g26" x="410" y="158"/><use href="#g33" x="416" y="158"/><use href="#g24" x="2" y="171"/><use href="#g42" x="8" y="171"/><use href="#g37" x="14" y="171"/><use href="#g40" x="20" y="171"/><use href="#g25" x="2" y="184"/><use href="#g23" x="8" y="184"/><use href="#g42" x="14" y="184"/><use href="#g40" x="20" y="184"/><use href="#g1" x="26" y="184"/><use href="#g4" x="32" y="184"/><use href="#g32" x="116" y="184"/><use href="#g25" x="122" y="184"/><use href="#g26" x="128" y="184"/><use href="#g40" x="380" y="184"/><use href="#g46" x="386" y="184"/><use href="#g40" x="392" y="184"/><use href="#g24" x="398" y="184"/><use href="#g36" x="404" y="184"/><use href="#g35" x="410" y="184"/><use href="#g27" x="416" y="184"/><use href="#g30" x="422" y="184"/><use href="#g28" x="428" y="184"/><use href="#g25" x="2" y="197"/><use href="#g26" x="8" y="197"/><use href="#g27" x="14" y="197"/><use href="#g22" x="20" y="197"/><use href="#g42" x="26" y="197"/><use href="#g33" x="32" y="197"/><use href="#g41" x="38" y="197"/><use href="#g37" x="248" y="197"/><use href="#g37" x="254" y="197"/><use href="#g37" x="260" y="197"/><use href="#g25" x="2" y="210"/><use href="#g26" x="8" y="210"/><use href="#g43" x="14" y="210"/><use href="#g2" x="20" y="210"/><use href="#g25" x="26" y="210"/><use href="#g42" x="380" y="236"/><use href="#g25" x="386" y="236"/><use href="#g26" x="392" y="236"/><use href="#g43" x="398" y="236"/><use href="#g37" x="248" y="249"/><use href="#g39" x="254" y="249"/><use href="#g36" x="260" y="249"/><use href="#g27" x="266" y="249"/><use href="#g30" x="272" y="249"/><use href="#g33" x="278" y="249"/><use href="#g26" x="284" y="249"/><use href="#g2" x="290" y="249"/><use href="#g25" x="296" y="249"/><use href="#g33" x="116" y="288"/><use href="#g25" x="122" y="288"/><use href="#g2" x="128" y="288"/><use href="#g40" x="134" y="288"/><use href="#g36" x="140" y="288"/><use href="#g2" x="146" y="288"/><use href="#g24" x="152" y="288"/><use href="#g36" x="158" y="288"/><use href="#g35" x="164" y="288"/><use href="#g27" x="170" y="288"/><use href="#g2" x="176" y="288"/><use href="#g25" x="182" y="288"/><use href="#g39" x="248" y="314"/><use href="#g22" x="254" y="314"/><use href="#g24" x="260" y="314"/><use href="#g36" x="266" y="314"/><use href="#g36" x="272" y="314"/><use href="#g35" x="278" y="314"/><use href="#g18" x="380" y="327"/><use href="#g4" x="386" y="327"/><use href="#g4" x="392" y="327"/><use href="#g45" x="380" y="340"/><use href="#g25" x="386" y="340"/><use href="#g28" x="392" y="340"/><use href="#g27" x="2" y="353"/><use href="#g30" x="8" y="353"/><use href="#g39" x="14" y="353"/><use href="#g34" x="20" y="353"/><use href="#g44" x="26" y="353"/><use href="#g22" x="32" y="353"/><use href="#g39" x="38" y="353"/><use href="#g26" x="44" y="353"/><use href="#g27" x="2" y="366"/><use href="#g36" x="8" y="366"/><use href="#g35" x="14" y="366"/><use href="#g41" x="20" y="366"/><use href="#g40" x="26" y="366"/><use href="#g33" x="116" y="366"/><use href="#g36" x="122" y="366"/><use href="#g28" x="128" y="366"/><use href="#g2" x="134" y="366"/><use href="#g25" x="140" y="366"/><use href="#g45" x="380" y="366"/><use href="#g30" x="386" y="366"/><use href="#g35" x="392" y="366"/><use href="#g26" x="398" y="366"/><use href="#g41" x="404" y="366"/><use href="#g25" x="410" y="366"/><use href="#g2" x="416" y="366"/><use href="#g25" x="422" y="366"/><use href="#g27" x="2" y="379"/><use href="#g36" x="8" y="379"/><use href="#g36" x="14" y="379"/><use href="#g34" x="20" y="379"/><use href="#g22" x="26" y="379"/><use href="#g41" x="32" y="379"/><use href="#g30" x="38" y="379"/><use href="#g24" x="44" y="379"/><use href="#g45" x="380" y="379"/><use href="#g34" x="386" y="379"/><use href="#g33" x="392" y="379"/><use href="#g28" x="2" y="405"/><use href="#g22" x="8" y="405"/><use href="#g30" x="14" y="405"/><use href="#g34" x="20" y="405"/><use href="#g33" x="116" y="405"/><use href="#g36" x="122" y="405"/><use href="#g28" x="128" y="405"/><use href="#g39" x="134" y="405"/><use href="#g36" x="140" y="405"/><use href="#g41" x="146" y="405"/><use href="#g22" x="152" y="405"/><use href="#g41" x="158" y="405"/><use href="#g26" x="164" y="405"/><use href="#g2" x="170" y="405"/><use href="#g25" x="176" y="405"/><use href="#g46" x="380" y="405"/><use href="#g42" x="386" y="405"/><use href="#g34" x="392" y="405"/><use href="#g28" x="2" y="418"/><use href="#g24" x="8" y="418"/><use href="#g36" x="14" y="418"/><use href="#g35" x="20" y="418"/><use href="#g27" x="26" y="418"/><use href="#g33" x="116" y="418"/><use href="#g40" x="122" y="418"/><use href="#g23" x="128" y="418"/><use href="#g1" x="134" y="418"/><use href="#g39" x="140" y="418"/><use href="#g26" x="146" y="418"/><use href="#g33" x="152" y="418"/><use href="#g26" x="158" y="418"/><use href="#g22" x="164" y="418"/><use href="#g40" x="170" y="418"/><use href="#g26" x="176" y="418"/><use href="#g2" x="182" y="418"/><use href="#g25" x="188" y="418"/><use href="#g28" x="2" y="431"/><use href="#g30" x="8" y="431"/><use href="#g34" x="14" y="431"/><use href="#g37" x="20" y="431"/><use href="#g33" x="116" y="431"/><use href="#g43" x="122" y="431"/><use href="#g34" x="128" y="431"/><use href="#g39" x="248" y="431"/><use href="#g24" x="254" y="431"/><use href="#g2" x="260" y="431"/><use href="#g25" x="266" y="431"/><use href="#g46" x="380" y="431"/><use href="#g42" x="386" y="431"/><use href="#g34" x="392" y="431"/><use href="#g2" x="398" y="431"/><use href="#g39" x="404" y="431"/><use href="#g26" x="410" y="431"/><use href="#g37" x="416" y="431"/><use href="#g36" x="422" y="431"/><use href="#g40" x="428" y="431"/><use href="#g2" x="434" y="431"/><use href="#g25" x="440" y="431"/><use href="#g28" x="2" y="444"/><use href="#g35" x="8" y="444"/><use href="#g36" x="14" y="444"/><use href="#g34" x="20" y="444"/><use href="#g26" x="26" y="444"/><use href="#g34" x="116" y="444"/><use href="#g22" x="122" y="444"/><use href="#g30" x="128" y="444"/><use href="#g33" x="134" y="444"/></g><g fill="#00cdcd"><use href="#g30" x="116" y="54"/><use href="#g35" x="122" y="54"/><use href="#g30" x="128" y="54"/><use href="#g41" x="134" y="54"/><use href="#g2" x="140" y="54"/><use href="#g25" x="146" y="54"/><use href="#g43" x="380" y="262"/><use href="#g27" x="386" y="262"/><use href="#g36" x="392" y="262"/><use href="#g35" x="398" y="262"/><use href="#g41" x="404" y="262"/><use href="#g24" x="410" y="262"/><use href="#g22" x="416" y="262"/><use href="#g37" x="422" y="262"/><use href="#g39" x="248" y="327"/><use href="#g24" x="254" y="327"/><use href="#g39" x="248" y="340"/><use href="#g24" x="254" y="340"/><use href="#g3" x="260" y="340"/><use href="#g2" x="266" y="340"/><use href="#g25" x="272" y="340"/><use href="#g39" x="248" y="353"/><use href="#g24" x="254" y="353"/><use href="#g4" x="260" y="353"/><use href="#g2" x="266" y="353"/><use href="#g25" x="272" y="353"/><use href="#g39" x="248" y="366"/><use href="#g24" x="254" y="366"/><use href="#g5" x="260" y="366"/><use href="#g2" x="266" y="366"/><use href="#g25" x="272" y="366"/><use href="#g39" x="248" y="379"/><use href="#g24" x="254" y="379"/><use href="#g6" x="260" y="379"/><use href="#g2" x="266" y="379"/><use href="#g25" x="272" y="379"/><use href="#g39" x="248" y="392"/><use href="#g24" x="254" y="392"/><use href="#g7" x="260" y="392"/><use href="#g2" x="266" y="392"/><use href="#g25" x="272" y="392"/><use href="#g39" x="248" y="405"/><use href="#g24" x="254" y="405"/><use href="#g8" x="260" y="405"/><use href="#g2" x="266" y="405"/><use href="#g25" x="272" y="405"/><use href="#g39" x="248" y="418"/><use href="#g24" x="254" y="418"/><use href="#g9" x="260" y="418"/><use href="#g2" x="266" y="418"/><use href="#g25" x="272" y="418"/><use href="#g39" x="248" y="444"/><use href="#g24" x="254" y="444"/><use href="#g2" x="260" y="444"/><use href="#g33" x="266" y="444"/><use href="#g36" x="272" y="444"/><use href="#g24" x="278" y="444"/><use href="#g22" x="284" y="444"/><use href="#g33" x="290" y="444"/></g></svg><i class="cur"></i></div>
</div>
<div id="panel" class="abs"></div>
<svg class="abs" style="left:0;top:0" width="800" height="600" viewBox="0 0 800 600">
 <g fill="none" stroke="#000" stroke-width="2" shape-rendering="crispEdges">
  <!-- shade -->
  <rect x="227" y="37" width="11" height="2" fill="#000" stroke="none"/>
 </g>
 <g fill="none" stroke="#000" stroke-width="1.8">
  <path d="M227.5 39.5 L237.5 39.5 L232.5 46.5 Z M230.3 41.3 L232.5 44 L234.7 41.3 Z" fill="#000" stroke="none" fill-rule="evenodd"/>
  <path d="M261.5 42.8 L271.5 42.8 L266.5 36.3 Z M264.3 41.2 L268.7 41.2 L266.5 38.6 Z" fill="#000" stroke="none" fill-rule="evenodd"/>
 </g>
 <g fill="#000" shape-rendering="crispEdges">
  <rect x="261" y="44" width="12" height="2"/>
  <!-- pin -->
  <rect x="245" y="40" width="6" height="1"/><rect x="245" y="42" width="6" height="1"/><rect x="244" y="41" width="1" height="1"/>
  <rect x="250" y="38" width="1" height="7"/><rect x="251" y="39" width="3" height="1"/><rect x="251" y="43" width="3" height="1"/>
  <rect x="253" y="38" width="2" height="7"/>
  <!-- minimize -->
  <rect x="731" y="39" width="5" height="2"/><rect x="731" y="42" width="5" height="2"/><rect x="731" y="41" width="2" height="1"/><rect x="734" y="41" width="2" height="1"/>
  <!-- maximize -->
  <rect x="746" y="37" width="9" height="2"/><rect x="746" y="44" width="9" height="2"/><rect x="746" y="39" width="2" height="5"/><rect x="753" y="39" width="2" height="5"/>
 </g>
 <g stroke="#000" stroke-width="2.2" stroke-linecap="square">
  <path d="M764.3 38.3 L771.2 45.2 M771.2 38.3 L764.3 45.2"/>
 </g>
</svg>
<svg class="abs" style="left:0;top:0" width="800" height="600" viewBox="0 0 800 600">
 <defs>
  <linearGradient id="gTerm" x1="0" y1="0" x2="0" y2="1">
   <stop offset="0" stop-color="#8a8a8a"/><stop offset="0.5" stop-color="#000"/><stop offset="1" stop-color="#8a8a8a"/>
  </linearGradient>
  <linearGradient id="gFold" x1="0" y1="0" x2="0" y2="1">
   <stop offset="0" stop-color="#b4b1a8"/><stop offset="1" stop-color="#76736a"/>
  </linearGradient>
  <linearGradient id="gGlobe" x1="0" y1="0" x2="1" y2="0.3">
   <stop offset="0" stop-color="#9ab4cc"/><stop offset="0.35" stop-color="#4e7498"/><stop offset="0.6" stop-color="#d0dce8"/><stop offset="0.8" stop-color="#5a82a8"/><stop offset="1" stop-color="#b8cce0"/>
  </linearGradient>
  <linearGradient id="gLock" x1="0" y1="0" x2="0" y2="1">
   <stop offset="0" stop-color="#666"/><stop offset="0.5" stop-color="#555"/><stop offset="1" stop-color="#444"/>
  </linearGradient>
  <linearGradient id="gPow" x1="0" y1="0" x2="0" y2="1">
   <stop offset="0" stop-color="#f4f4f4"/><stop offset="1" stop-color="#b0b0b0"/>
  </linearGradient>
  <linearGradient id="gFilm" x1="0" y1="0" x2="1" y2="0">
   <stop offset="0" stop-color="#b8b8b8"/><stop offset="0.5" stop-color="#f4f4f4"/><stop offset="1" stop-color="#b8b8b8"/>
  </linearGradient>
  <linearGradient id="gPrn" x1="0" y1="0" x2="0" y2="1">
   <stop offset="0" stop-color="#f0f0f0"/><stop offset="0.5" stop-color="#b8b8b8"/><stop offset="1" stop-color="#808080"/>
  </linearGradient>
  <linearGradient id="gOr" x1="0" y1="0" x2="1" y2="0">
   <stop offset="0" stop-color="#c87a10"/><stop offset="0.5" stop-color="#f4b040"/><stop offset="1" stop-color="#d89020"/>
  </linearGradient>
  <g id="appIcon">
   <path d="M4.8 1.8 A3.8 1.4 0 0 1 12.4 1.8 V8.8 H4.8 Z" fill="#dcd8cc" stroke="#8a877e" stroke-width="0.6"/>
   <path d="M0.6 3.2 A3.6 1.3 0 0 1 7.8 3.2 V12.6 A3.6 1.3 0 0 1 0.6 12.6 Z" fill="url(#gOr)" stroke="#8a5a10" stroke-width="0.5"/>
   <ellipse cx="4.2" cy="3.2" rx="3.5" ry="1.2" fill="#f8c860"/>
   <path d="M6.4 9.6 L7.6 8.2 H13.6 L13.6 13.6 L12.4 15 H6.4 Z" fill="#d8141a" stroke="#801010" stroke-width="0.5"/>
   <path d="M6.4 9.6 L7.6 8.2 H13.6 L12.4 9.6 Z" fill="#ff5a5a"/>
  </g>
 </defs>
 <!-- top button icon -->
 <use href="#appIcon" x="6" y="7"/>
 <!-- panel handle dots -->
 <g shape-rendering="crispEdges"><rect x="90" y="567" width="4" height="4" fill="#fff"/><rect x="90" y="567" width="3" height="3" fill="#9a9a9a"/><rect x="91" y="568" width="1" height="1" fill="#d8d8d8"/><rect x="90" y="573" width="4" height="4" fill="#fff"/><rect x="90" y="573" width="3" height="3" fill="#9a9a9a"/><rect x="91" y="574" width="1" height="1" fill="#d8d8d8"/><rect x="90" y="579" width="4" height="4" fill="#fff"/><rect x="90" y="579" width="3" height="3" fill="#9a9a9a"/><rect x="91" y="580" width="1" height="1" fill="#d8d8d8"/><rect x="90" y="585" width="4" height="4" fill="#fff"/><rect x="90" y="585" width="3" height="3" fill="#9a9a9a"/><rect x="91" y="586" width="1" height="1" fill="#d8d8d8"/><rect x="90" y="591" width="4" height="4" fill="#fff"/><rect x="90" y="591" width="3" height="3" fill="#9a9a9a"/><rect x="91" y="592" width="1" height="1" fill="#d8d8d8"/><rect x="706" y="567" width="4" height="4" fill="#fff"/><rect x="706" y="567" width="3" height="3" fill="#9a9a9a"/><rect x="707" y="568" width="1" height="1" fill="#d8d8d8"/><rect x="706" y="573" width="4" height="4" fill="#fff"/><rect x="706" y="573" width="3" height="3" fill="#9a9a9a"/><rect x="707" y="574" width="1" height="1" fill="#d8d8d8"/><rect x="706" y="579" width="4" height="4" fill="#fff"/><rect x="706" y="579" width="3" height="3" fill="#9a9a9a"/><rect x="707" y="580" width="1" height="1" fill="#d8d8d8"/><rect x="706" y="585" width="4" height="4" fill="#fff"/><rect x="706" y="585" width="3" height="3" fill="#9a9a9a"/><rect x="707" y="586" width="1" height="1" fill="#d8d8d8"/><rect x="706" y="591" width="4" height="4" fill="#fff"/><rect x="706" y="591" width="3" height="3" fill="#9a9a9a"/><rect x="707" y="592" width="1" height="1" fill="#d8d8d8"/></g>
 <!-- terminal -->
 <rect x="102.5" y="571.5" width="23" height="18.5" rx="1" fill="#e0e0e0" stroke="#3a3a3a"/>
 <rect x="104" y="573" width="20" height="15.5" fill="url(#gTerm)"/>
 <!-- folder -->
 <path d="M150.5 573 l1.5 -2 h6 l1 2 z" fill="#d8a838" stroke="#5a4a20" stroke-width="0.8"/>
 <rect x="137.5" y="573.5" width="21.5" height="17.5" fill="url(#gFold)" stroke="#3a3a36"/>
 <!-- arrows -->
 <path d="M169 583 L173 579 L177 583 Z" fill="#a8a8a8"/><rect x="169" y="583" width="8" height="1" fill="#fff"/>
 <path d="M544 583 L548 579 L552 583 Z" fill="#a8a8a8"/><rect x="544" y="583" width="8" height="1" fill="#fff"/>
 <!-- globe -->
 <g transform="translate(198.5 580.5) rotate(-40)"><ellipse rx="14.2" ry="5.8" fill="none" stroke="#111" stroke-width="1.5"/></g>
 <clipPath id="cg"><circle cx="198.5" cy="580.5" r="9.2"/></clipPath>
 <g clip-path="url(#cg)">
  <rect x="188" y="570" width="22" height="22" fill="url(#gGlobe)"/>
  <path d="M185 584 L195.5 578.5 L202.5 585 L199.8 578 L199.5 566 L185 566 Z" fill="#fff"/>
 </g>
 <circle cx="198.5" cy="580.5" r="9.2" fill="none" stroke="#111" stroke-width="1"/>
 <g transform="translate(198.5 580.5) rotate(-40)"><path d="M -14.2 0 A 14.2 5.8 0 0 0 14.2 0" fill="none" stroke="#111" stroke-width="1.5"/></g>
 <!-- envelope -->
 <g transform="rotate(-17 232 581)">
  <rect x="222" y="574" width="20" height="13" fill="#c8c8c8" stroke="#9a9a9a"/>
  <path d="M222 574 L232 581 L242 574" fill="none" stroke="#a0a0a0"/>
 </g>
 <!-- film/music -->
 <rect x="254" y="571" width="24" height="20" fill="url(#gFilm)"/>
 <rect x="254" y="571" width="24" height="4.5" fill="#333"/><rect x="254" y="587" width="24" height="4.5" fill="#333"/>
 <g fill="#ddd"><rect x="255.5" y="572.5" width="2" height="1.5"/><rect x="259.5" y="572.5" width="2" height="1.5"/><rect x="263.5" y="572.5" width="2" height="1.5"/><rect x="267.5" y="572.5" width="2" height="1.5"/><rect x="271.5" y="572.5" width="2" height="1.5"/><rect x="275.5" y="572.5" width="2" height="1.5"/>
 <rect x="255.5" y="588.5" width="2" height="1.5"/><rect x="259.5" y="588.5" width="2" height="1.5"/><rect x="263.5" y="588.5" width="2" height="1.5"/><rect x="267.5" y="588.5" width="2" height="1.5"/><rect x="271.5" y="588.5" width="2" height="1.5"/><rect x="275.5" y="588.5" width="2" height="1.5"/></g>
 <path d="M261 588 V577 L272 571 V584" fill="none" stroke="#3a3020" stroke-width="3.2"/>
 <path d="M261 588 V577 L272 571 V584" fill="none" stroke="#eccb66" stroke-width="1.6"/>
 <ellipse cx="258.5" cy="588.5" rx="3.2" ry="2.8" fill="#eccb66" stroke="#3a3020" stroke-width="0.8"/>
 <ellipse cx="269.5" cy="584.5" rx="3.2" ry="2.8" fill="#eccb66" stroke="#3a3020" stroke-width="0.8"/>
 <!-- separators -->
 <g fill="#a0a0a0" shape-rendering="crispEdges">
  <rect x="286" y="570" width="1" height="20"/><rect x="467" y="570" width="1" height="20"/><rect x="593" y="570" width="1" height="20"/><rect x="652" y="570" width="1" height="20"/>
 </g>
 <g fill="#fff" shape-rendering="crispEdges">
  <rect x="287" y="570" width="1" height="20"/><rect x="468" y="570" width="1" height="20"/><rect x="594" y="570" width="1" height="20"/><rect x="653" y="570" width="1" height="20"/>
 </g>
 <!-- pager -->
 <rect x="292" y="565" width="42" height="32" fill="#394a72"/>
 <rect x="304.5" y="568.5" width="28.5" height="26" fill="#4262a8" stroke="#fff"/>
 <use href="#appIcon" x="312" y="574"/>
 <rect x="335" y="565" width="42" height="32" fill="#a2a2a2"/>
 <rect x="378" y="565" width="42" height="32" fill="#a2a2a2"/>
 <rect x="421" y="565" width="42" height="32" fill="#a2a2a2"/>
 <!-- tools -->
 <path d="M477.7 579.6 L478.7 575.4 L482.9 570.3 L487.6 573.5 L485.7 576.3 L488 579.1 L487.6 580.5 L483.3 581 L480 583.8 L477.7 582.4 Z" fill="#ececec" stroke="#333" stroke-width="0.9"/>
 <path d="M488 573.5 L490.4 571.2 L493.6 569.8 L496 570.7 L494.1 573.1 L494.6 575.4 L496.9 575.9 L499.7 574 L500.6 576.8 L499.2 579.6 L496.4 581 L492.7 582 L490.8 581 L488 578.2 Z" fill="#ececec" stroke="#333" stroke-width="0.9"/>
 <path d="M490.5 582.5 L498.5 589" stroke="#3a2a00" stroke-width="5.2" stroke-linecap="round"/>
 <path d="M490.5 582.5 L498.5 589" stroke="#e8b838" stroke-width="3.4" stroke-linecap="round"/>
 <path d="M488.5 581.5 L479.5 589.5" stroke="#3a2a00" stroke-width="5.2" stroke-linecap="round"/>
 <path d="M488.5 581.5 L479.5 589.5" stroke="#e8b838" stroke-width="3.4" stroke-linecap="round"/>
 <!-- printer -->
 <rect x="516.5" y="571.5" width="13" height="9" fill="#fff" stroke="#444"/>
 <rect x="511.5" y="578.5" width="23" height="12" rx="2" fill="url(#gPrn)" stroke="#333"/>
 <rect x="514" y="582" width="18" height="2" fill="#9a9a9a"/>
 <rect x="514" y="584" width="18" height="2" fill="#111"/>
 <path d="M514.5 584 V589.5 H531.5 V584" fill="none" stroke="#e0c868" stroke-width="1.4"/>
 <!-- lifebuoy -->
 <circle cx="573" cy="580.5" r="8" fill="none" stroke="#222" stroke-width="6.2"/>
 <circle cx="573" cy="580.5" r="8" fill="none" stroke="#fff" stroke-width="4.6"/>
 <circle cx="573" cy="580.5" r="8" fill="none" stroke="#e04a2a" stroke-width="4.6" stroke-dasharray="12.566 12.566" stroke-dashoffset="1.4"/>
 <!-- lock -->
 <path d="M605 588.8 V580 A5.5 6 0 0 1 616 580 V588.8 Z" fill="url(#gLock)" stroke="#222" stroke-width="0.8"/>
 <path d="M607.6 581.5 V579.6 A2.9 3 0 0 1 613.4 579.6 V581.5 Z" fill="#d0d0d0"/>
 <path d="M607.6 581.5 H613.4 V582.5 H607.6 Z" fill="#9a9a9a"/>
 <path d="M608.6 583.2 h3.8 l-1.2 1.6 v2.6 h-1.4 v-2.6 z" fill="#fff"/>
 <!-- power -->
 <rect x="629.5" y="573.5" width="13.5" height="15" rx="1" fill="url(#gPow)" stroke="#333"/>
 <circle cx="636.2" cy="581.3" r="4" fill="none" stroke="#111" stroke-width="1.8"/>
 <rect x="635.3" y="576" width="1.8" height="5.2" fill="#111"/>
 <!-- clock -->
 <g fill="#111"><rect x="665" y="577" width="2" height="4.5"/><rect x="665" y="582" width="2" height="4.5"/><rect x="669" y="576" width="5" height="2"/><rect x="673" y="577" width="2" height="5"/><rect x="669" y="580.5" width="5" height="2"/><rect x="668" y="582" width="2" height="5"/><rect x="669" y="585" width="5" height="2"/><rect x="685" y="576" width="5" height="2"/><rect x="689" y="577" width="2" height="5"/><rect x="689" y="582" width="2" height="5"/><rect x="685" y="585" width="5" height="2"/><rect x="684" y="582" width="2" height="5"/><rect x="684" y="577" width="2" height="5"/><rect x="693" y="576" width="5" height="2"/><rect x="697" y="577" width="2" height="5"/><rect x="693" y="580.5" width="5" height="2"/><rect x="692" y="582" width="2" height="5"/><rect x="693" y="585" width="5" height="2"/></g>
</svg>
</body></html>
